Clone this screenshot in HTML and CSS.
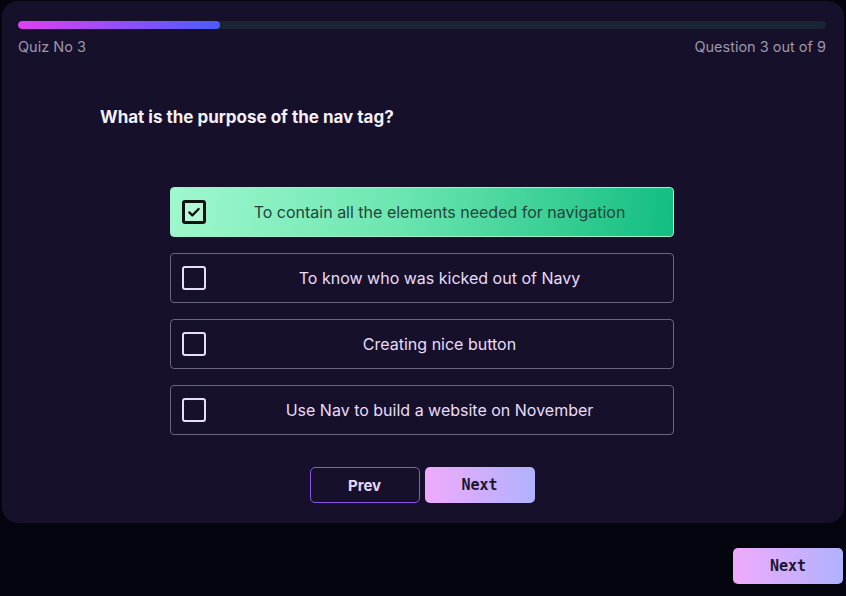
FILE: index.html
```html
<!DOCTYPE html>
<html>
<head>
<meta charset="utf-8">
<link rel="stylesheet" href="styles.css">
</head>
<body>
<div class="page">
  <div class="card">
    <div class="progress"><div class="fill" style="width:25%"></div></div>
    <div class="meta"><span>Quiz No 3</span><span>Question 3 out of 9</span></div>
    <h1 class="question">What is the purpose of the nav tag?</h1>
    <div class="options">
      <div class="option selected">
        <span class="box"><svg viewBox="0 0 24 24" width="16" height="16"><path d="M5 12.5l4.5 4.5L19 7.5" fill="none" stroke="#111" stroke-width="3.4" stroke-linecap="round" stroke-linejoin="round"/></svg></span>
        <span class="label">To contain all the elements needed for navigation</span>
      </div>
      <div class="option"><span class="box"></span><span class="label">To know who was kicked out of Navy</span></div>
      <div class="option"><span class="box"></span><span class="label">Creating nice button</span></div>
      <div class="option"><span class="box"></span><span class="label">Use Nav to build a website on November</span></div>
    </div>
    <div class="nav">
      <button class="btn prev">Prev</button>
      <button class="btn next">Next</button>
    </div>
  </div>
  <div class="footer">
    <button class="btn next">Next</button>
  </div>
</div>
</body>
</html>
```
FILE: styles.css
```css
html, body {
  margin: 0;
  padding: 0;
  background: #05050f;
  font-family: Inter, "Noto Sans", sans-serif;
}
.page {
  padding: 1px 2px 0 2px;
}
.card {
  background: #17102b;
  border-radius: 16px;
  padding: 20px 18px 0 16px;
  height: 522px;
  box-sizing: border-box;
  display: flex;
  flex-direction: column;
}
.card > * {
  flex: none;
}
.progress {
  height: 8px;
  background: #1b2434;
  border-radius: 4px;
  overflow: hidden;
}
.fill {
  height: 100%;
  background: linear-gradient(90deg, #e040f0, #4a5cff);
  border-radius: 4px;
}
.meta {
  display: flex;
  justify-content: space-between;
  color: #9c97a9;
  font-size: 14.5px;
  margin-top: 9px;
  letter-spacing: 0;
}
.question {
  color: #f3f0fa;
  font-size: 17px;
  font-weight: 700;
  margin: 52px 0 0 82px;
  letter-spacing: 0;
}
.options {
  margin: 60px 0 0 152px;
  width: 504px;
  display: flex;
  flex-direction: column;
  gap: 16px;
}
.option {
  height: 50px;
  box-sizing: border-box;
  border: 1px solid #6c6582;
  border-radius: 4px;
  display: flex;
  align-items: center;
  padding-left: 11px;
  color: #e8dcf8;
  font-size: 16px;
}
.option.selected {
  background: linear-gradient(100deg, #a0f8ce 0%, #6ce6b0 45%, #12bd80 100%);
  border-color: #9ef0cc;
  color: #23433c;
}
.box {
  width: 24px;
  height: 24px;
  box-sizing: border-box;
  border: 2px solid #e9dcfb;
  border-radius: 3px;
  display: flex;
  align-items: center;
  justify-content: center;
  flex: none;
}
.selected .box {
  border: 3px solid #111;
  background: rgba(255,255,255,0.25);
}
.label {
  flex: 1;
  text-align: center;
}
.nav {
  display: flex;
  justify-content: center;
  gap: 5px;
  margin-top: 32px;
}
.btn {
  width: 110px;
  height: 36px;
  border-radius: 5px;
  font-size: 15px;
  font-weight: 700;
  cursor: pointer;
}
.prev {
  background: transparent;
  border: 1px solid #8a55e6;
  color: #e6d8f8;
  font-family: Inter, sans-serif;
}
.next {
  border: none;
  background: linear-gradient(90deg, #f0aafc, #b0b2fe);
  color: #1c1630;
  font-family: "DejaVu Sans Mono", monospace;
}
.footer {
  display: flex;
  justify-content: flex-end;
  margin-top: 25px;
  padding-right: 1px;
}
```
